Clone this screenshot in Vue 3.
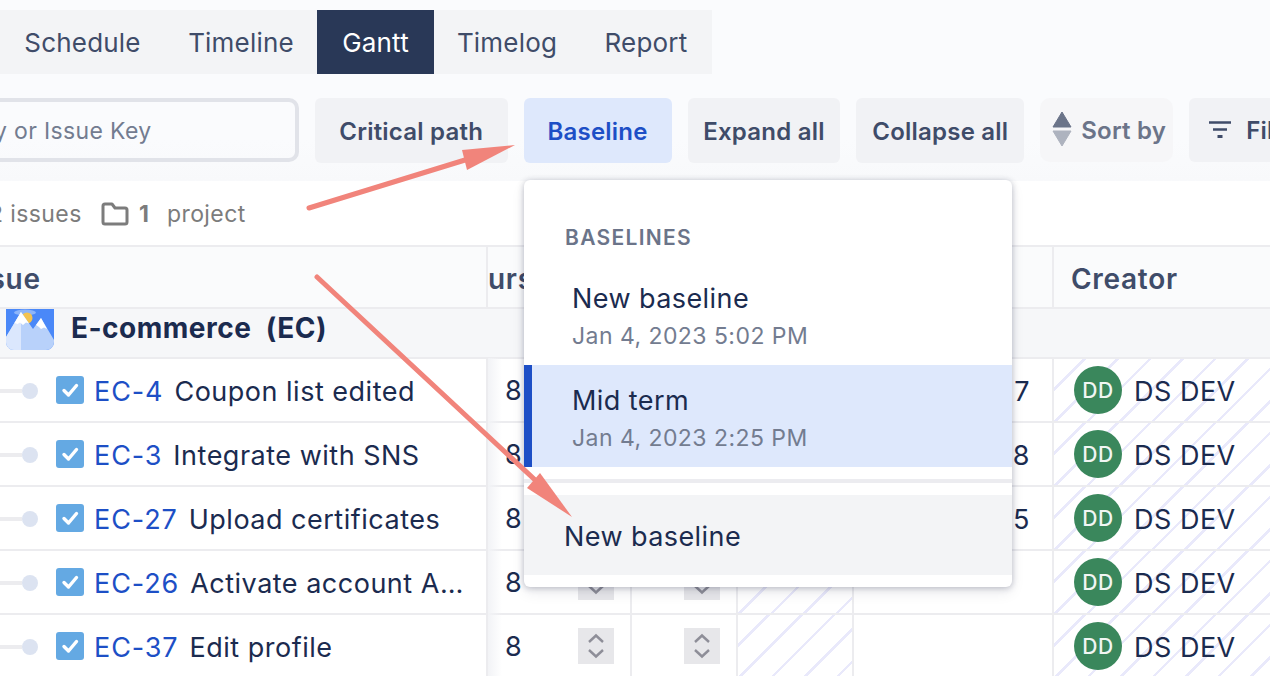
<script setup>
const tabs = ['Schedule', 'Timeline', 'Gantt', 'Timelog', 'Report']
const rows = [
  { key: 'EC-4', title: 'Coupon list edited', num: '7' },
  { key: 'EC-3', title: 'Integrate with SNS', num: '8' },
  { key: 'EC-27', title: 'Upload certificates', num: '5' },
  { key: 'EC-26', title: 'Activate account A…', num: '' },
  { key: 'EC-37', title: 'Edit profile', num: '' },
]
</script>

<template>
  <div class="page">
    <div class="top">
      <nav class="tabs">
        <div v-for="t in tabs" :key="t" class="tab" :class="{ active: t === 'Gantt' }">{{ t }}</div>
      </nav>
      <div class="toolbar">
        <div class="search"><span>y or Issue Key</span></div>
        <div class="btn crit">Critical path</div>
        <div class="btn base">Baseline</div>
        <div class="btn small">Expand all</div>
        <div class="btn small">Collapse all</div>
        <div class="btn sort">
          <svg width="20" height="36" viewBox="0 0 20 36">
            <path d="M10 0 L19 15 H1 Z" fill="#6b7489" stroke="#6b7489" stroke-linejoin="round" />
            <path d="M1 19 H19 L10 34 Z" fill="#aeb3bf" stroke="#aeb3bf" stroke-linejoin="round" />
          </svg>
          <span>Sort by</span>
        </div>
        <div class="btn filter">
          <svg width="24" height="18" viewBox="0 0 24 18">
            <path d="M1 1.500 H23 M5 8.500 H19" stroke="#3f4c69" stroke-width="2.500" />
            <path d="M9.500 15.500 H14.500" stroke="#3f4c69" stroke-width="3" />
          </svg>
          <span>Filter</span>
        </div>
      </div>
    </div>

    <div class="summary">
      <span class="iss">2 issues</span>
      <svg class="folder" width="28" height="24" viewBox="0 0 28 24" fill="none">
        <path d="M2 4 a2 2 0 0 1 2-2 h7 l3 4 h10 a2 2 0 0 1 2 2 v12 a2 2 0 0 1-2 2 H4 a2 2 0 0 1-2-2 Z" stroke="#7c7c7c" stroke-width="3" stroke-linejoin="round" />
      </svg>
      <b>1</b>
      <span class="proj">project</span>
    </div>

    <div class="table">
      <div class="row head">
        <div class="cell issue"><span class="sue">Issue</span></div>
        <div class="cell c1"><span class="urs">urs</span></div>
        <div class="cell c2"></div>
        <div class="cell c3"></div>
        <div class="cell c4"></div>
        <div class="cell c5"><span class="creator">Creator</span></div>
      </div>
      <div class="row proj-row">
        <div class="proj-icon">
          <svg width="48" height="41" viewBox="0 0 48 41">
            <path d="M0 0 H48 V33 a8 8 0 0 1-8 8 H8 a8 8 0 0 1-8-8 Z" fill="#4a88f8" />
            <ellipse cx="19" cy="3.500" rx="11" ry="3" fill="#8db5fa" />
            <circle cx="21" cy="9" r="5.500" fill="#f4c350" />
            <path d="M0 28 L15 3 L27 20 L35 9 L48 31 V33 a8 8 0 0 1-8 8 H8 a8 8 0 0 1-8-8 Z" fill="#b8d1fa" />
            <path d="M0 28 L15 3 V41 H8 a8 8 0 0 1-8-8 Z" fill="#dbe7fd" />
            <path d="M8.500 14 L15 3 L23 14.500 L20 13.500 L17 16 L14 13.500 L11.500 15 Z" fill="#fff" />
            <path d="M30 16 L35 9 L41 20 L38 18.500 L35 20 L33 18 Z" fill="#fff" />
          </svg>
        </div>
        <span class="proj-name">E-commerce&nbsp; (EC)</span>
      </div>
      <div v-for="r in rows" :key="r.key" class="row body">
        <div class="cell issue task">
          <i class="line"></i><i class="dot"></i>
          <span class="check">
            <svg width="28" height="28" viewBox="0 0 28 28" fill="none">
              <path d="M8 14.500 L12.500 19 L20.500 9.500" stroke="#fff" stroke-width="3.400" stroke-linecap="round" stroke-linejoin="round" />
            </svg>
          </span>
          <a class="key">{{ r.key }}</a>
          <span class="title">{{ r.title }}</span>
        </div>
        <div class="cell c1 hours">
          <span class="eight">8</span>
          <span class="stepper">
            <svg width="20" height="28" viewBox="0 0 20 28" fill="none"><path d="M3 10 L10 3.500 L17 10 M3 18 L10 24.500 L17 18" stroke="#8e8e98" stroke-width="2.400" /></svg>
          </span>
        </div>
        <div class="cell c2 center">
          <span class="stepper">
            <svg width="20" height="28" viewBox="0 0 20 28" fill="none"><path d="M3 10 L10 3.500 L17 10 M3 18 L10 24.500 L17 18" stroke="#8e8e98" stroke-width="2.400" /></svg>
          </span>
        </div>
        <div class="cell c3 hatch"></div>
        <div class="cell c4 num">{{ r.num }}</div>
        <div class="cell c5 hatch dev">
          <span class="avatar">DD</span>
          <span class="dev-name">DS DEV</span>
        </div>
      </div>
      <div class="shadow"></div>
    </div>

    <div class="menu">
      <div class="menu-label">BASELINES</div>
      <div class="menu-item">
        <div class="mi-name">New baseline</div>
        <div class="mi-date">Jan 4, 2023 5:02 PM</div>
      </div>
      <div class="menu-item selected">
        <div class="mi-name">Mid term</div>
        <div class="mi-date">Jan 4, 2023 2:25 PM</div>
      </div>
      <div class="divider"></div>
      <div class="new">New baseline</div>
    </div>

    <svg class="arrows" width="1270" height="676" viewBox="0 0 1270 676" fill="none">
      <path d="M309 208 L478 156" stroke="#f1847b" stroke-width="5" stroke-linecap="round" />
      <path d="M515 145 L462 150 L467 170 Z" fill="#f1847b" />
      <path d="M317 277 L548 492" stroke="#f1847b" stroke-width="5" stroke-linecap="round" />
      <path d="M572 517 L540 473 L527 488 Z" fill="#f1847b" />
    </svg>
  </div>
</template>

<style scoped>
.page {
  position: relative;
  width: 1270px;
  height: 676px;
  overflow: hidden;
  background: #fff;
  font-family: Inter, "Liberation Sans", sans-serif;
  color: #1b2b4f;
}
.top {
  height: 181px;
  padding-top: 10px;
  box-sizing: border-box;
  background: linear-gradient(#fafbfd 0 140px, #f8f9fb 181px);
}
.tabs {
  display: flex;
  width: 712px;
  height: 64px;
  background: #f3f4f6;
}
.tab {
  display: flex;
  align-items: center;
  justify-content: center;
  font-size: 26px;
  letter-spacing: 0.2px;
  color: #3f4c69;
}
.tab:nth-child(1) { width: 165px; }
.tab:nth-child(2) { width: 152px; }
.tab:nth-child(3) { width: 117px; }
.tab:nth-child(4) { width: 146px; }
.tab:nth-child(5) { width: 132px; }
.tab.active {
  background: #293857;
  color: #fff;
}
.toolbar {
  display: flex;
  gap: 16px;
  margin-top: 24px;
  margin-left: -11px;
  width: 1400px;
}
.search {
  box-sizing: border-box;
  width: 310px;
  height: 64px;
  padding-top: 2px;
  border: 4px solid #e1e3e9;
  border-radius: 10px;
  display: flex;
  align-items: center;
  padding-left: 1px;
  font-size: 23px;
  letter-spacing: 0.35px;
  color: #737c90;
}
.btn {
  box-sizing: border-box;
  height: 65px;
  padding-top: 2px;
  display: flex;
  align-items: center;
  border-radius: 6px;
  background: #f1f2f5;
  font-size: 24px;
  font-weight: 600;
  letter-spacing: 0.22px;
  color: #3f4c69;
  white-space: nowrap;
}
.crit { width: 193px; justify-content: center; }
.base { width: 148px; justify-content: center; background: #dee8fc; color: #1d4fc6; }
.small { justify-content: center; }
.btn.small:nth-child(4) { width: 153px; }
.btn.small:nth-child(5) { width: 168px; }
.sort {
  width: 133px;
  height: 64px;
  gap: 9px;
  padding-left: 12px;
  padding-top: 0;
  border-radius: 10px;
  background: #f6f6f8;
  color: #6b7489;
}
.filter {
  width: 200px;
  height: 64px;
  gap: 14px;
  padding-left: 19px;
  padding-top: 0;
}
.summary {
  height: 65px;
  display: flex;
  align-items: center;
  font-size: 23px;
  letter-spacing: 0.4px;
  color: #7c7c7c;
  box-sizing: border-box;
}
.iss { margin-left: -11px; width: 112px; white-space: nowrap; }
.folder { margin-right: 10px; }
.summary b { width: 28px; color: #7c7c7c; }
.table { position: relative; }
.row {
  display: flex;
  box-sizing: border-box;
  border-bottom: 2px solid #ececef;
}
.head {
  height: 64px;
  margin-top: -1px;
  border-top: 2px solid #ececef;
  background: #fafbfc;
  font-size: 28px;
  font-weight: 600;
  letter-spacing: 0.7px;
  color: #3f4c69;
}
.head .cell { padding-top: 3px; }
.cell {
  box-sizing: border-box;
  border-right: 2px solid #ececef;
  display: flex;
  align-items: center;
  overflow: hidden;
}
.issue { width: 488px; }
.c1 { width: 144px; }
.c2 { width: 106px; }
.c3 { width: 116px; }
.c4 { width: 200px; }
.c5 { width: 216px; border-right: 0; }
.sue { margin-left: -35px; }
.creator { margin-left: 17px; }
.proj-row {
  height: 50px;
  background: #f6f7f9;
  align-items: center;
  position: relative;
}
.proj-icon { margin-left: 6px; height: 41px; align-self: flex-start; }
.proj-name {
  margin-left: 17px;
  font-size: 28px;
  font-weight: 700;
  letter-spacing: 0.5px;
  margin-top: -10px;
}
.body { height: 64px; font-size: 27px; letter-spacing: 0.5px; }
.task { position: relative; }
.line {
  width: 22px;
  height: 4px;
  margin-top: 2px;
  background: #ececef;
}
.dot {
  width: 16px;
  height: 16px;
  margin-top: 2px;
  border-radius: 50%;
  background: #dce3f1;
}
.check {
  display: block;
  width: 28px;
  height: 28px;
  margin-left: 18px;
  border-radius: 3px;
  background: #64a9e3;
}
.key { margin-left: 10px; padding-top: 2px; color: #1d4fc6; letter-spacing: 0.9px; }
.title { margin-left: 11px; padding-top: 2px; white-space: nowrap; }
.hours { padding-left: 17px; }
.eight { width: 73px; }
.stepper {
  display: flex;
  align-items: center;
  justify-content: center;
  width: 36px;
  height: 36px;
  background: #e7e7ea;
}
.center { padding-left: 52px; }
.hatch {
  background: repeating-linear-gradient(135deg, transparent 0 20.500px, #e9e9fb 20.500px 23px);
}
.num { justify-content: flex-end; padding-right: 22px; padding-top: 2px; }
.dev { padding-left: 20px; gap: 12px; }
.avatar {
  display: flex;
  align-items: center;
  justify-content: center;
  width: 48px;
  height: 48px;
  border-radius: 50%;
  background: #3a875c;
  color: #f1f6f3;
  font-size: 21px;
  font-weight: 500;
  letter-spacing: 0.5px;
}
.dev-name { white-space: nowrap; padding-top: 2px; }
.shadow {
  position: absolute;
  left: 488px;
  top: 113px;
  bottom: 0;
  width: 14px;
  background: linear-gradient(90deg, #f2f3f6, rgba(255, 255, 255, 0));
}
.menu {
  position: absolute;
  left: 524px;
  top: 180px;
  width: 488px;
  height: 407px;
  background: #fff;
  border-radius: 6px;
  box-shadow: 0 1px 6px rgba(20, 30, 60, 0.28), 0 6px 14px rgba(20, 30, 60, 0.08);
  overflow: hidden;
}
.menu-label {
  padding: 45px 0 0 41px;
  height: 79px;
  box-sizing: border-box;
  font-size: 21px;
  font-weight: 600;
  letter-spacing: 1.3px;
  color: #6b7489;
}
.menu-item {
  height: 102px;
  box-sizing: border-box;
  padding: 19px 0 0 48px;
  margin-top: 4px;
}
.menu-item.selected {
  margin-top: 0;
  padding-left: 40px;
  border-left: 8px solid #1d4fc6;
  background: #dee8fc;
}
.mi-name { font-size: 27px; letter-spacing: 0.42px; line-height: 34px; }
.mi-date { font-size: 23px; letter-spacing: 0.45px; color: #737c90; line-height: 34px; margin-top: 3px; }
.divider {
  height: 4px;
  margin: 12px 0;
  background: #ececf0;
}
.new {
  height: 80px;
  box-sizing: border-box;
  padding-top: 2px;
  display: flex;
  align-items: center;
  padding-left: 40px;
  background: #f3f4f6;
  font-size: 27px;
  letter-spacing: 0.42px;
}
.arrows {
  position: absolute;
  left: 0;
  top: 0;
  pointer-events: none;
}
</style>
